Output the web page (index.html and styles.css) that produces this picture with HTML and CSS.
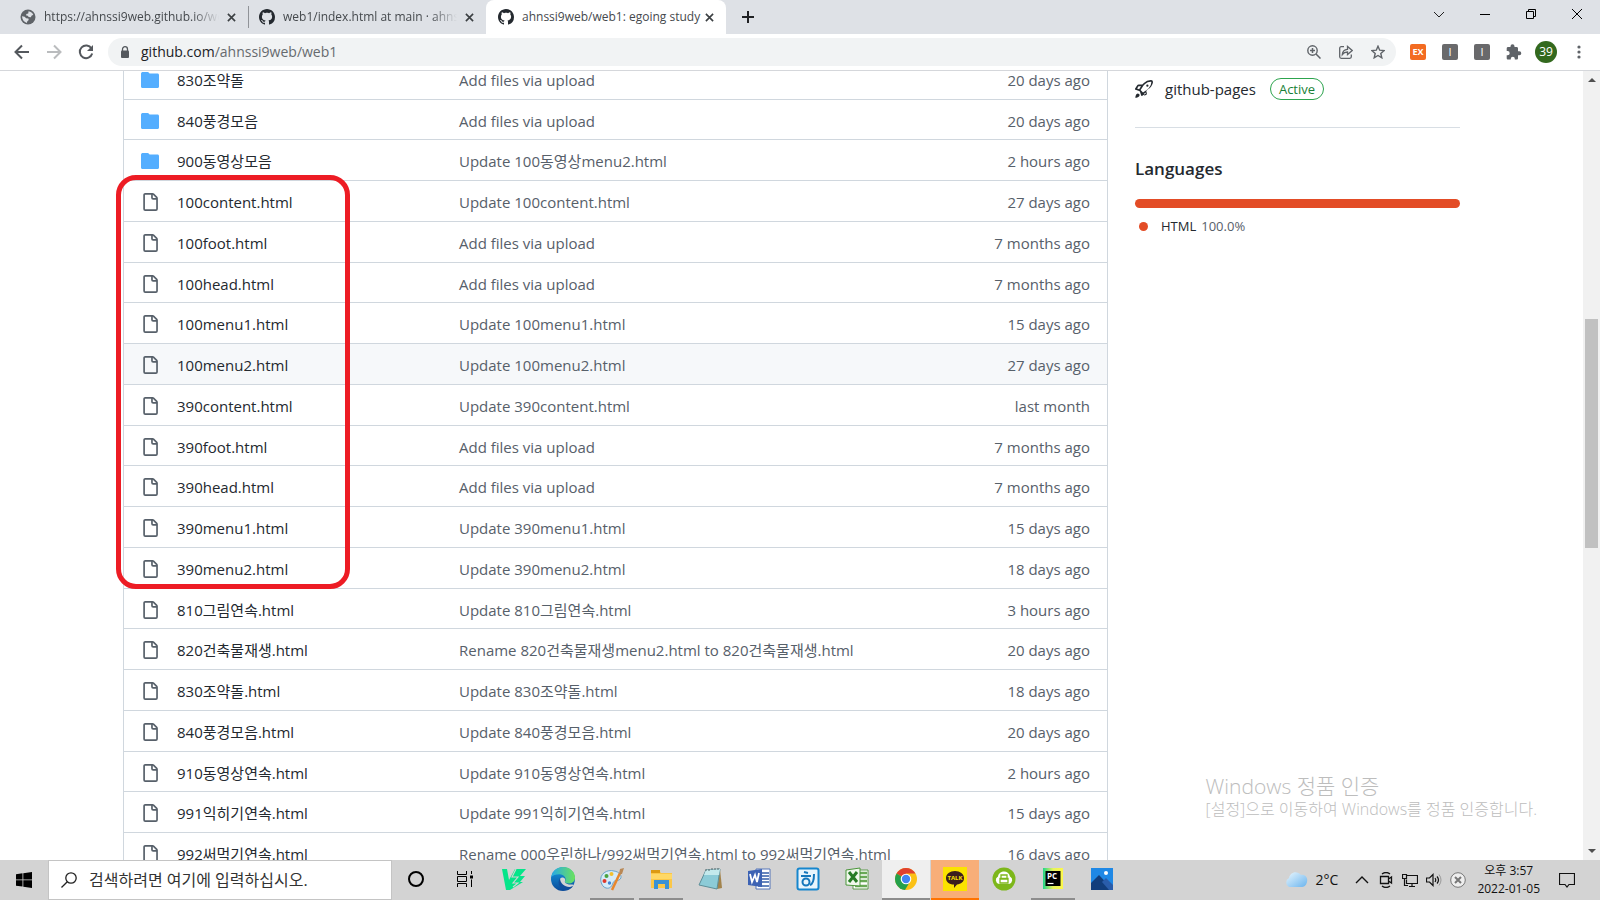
FILE: index.html
```html
<!DOCTYPE html>
<html lang="ko">
<head>
<meta charset="utf-8">
<title>ahnssi9web/web1: egoing study</title>
<link rel="stylesheet" href="styles.css">
</head>
<body>
<svg class="defs" aria-hidden="true">
  <symbol id="github" viewBox="0 0 16 16"><path fill="#24292f" d="M8 0C3.58 0 0 3.58 0 8c0 3.54 2.29 6.53 5.47 7.59.4.07.55-.17.55-.38 0-.19-.01-.82-.01-1.49-2.01.37-2.53-.49-2.69-.94-.09-.23-.48-.94-.82-1.13-.28-.15-.68-.52-.01-.53.63-.01 1.08.58 1.23.82.72 1.21 1.87.87 2.33.66.07-.52.28-.87.51-1.07-1.78-.2-3.64-.89-3.64-3.95 0-.87.31-1.59.82-2.15-.08-.2-.36-1.02.08-2.12 0 0 .67-.21 2.2.82.64-.18 1.32-.27 2-.27s1.36.09 2 .27c1.53-1.04 2.2-.82 2.2-.82.44 1.1.16 1.92.08 2.12.51.56.82 1.27.82 2.15 0 3.07-1.87 3.75-3.65 3.95.29.25.54.73.54 1.48 0 1.07-.01 1.93-.01 2.2 0 .21.15.46.55.38A8.01 8.01 0 0 0 16 8c0-4.42-3.58-8-8-8z"/></symbol>
  <symbol id="close" viewBox="0 0 10 10"><path d="M1 1l8 8M9 1L1 9" stroke="#3c4043" stroke-width="1.8" fill="none"/></symbol>
  <symbol id="folder" viewBox="0 0 18 18"><path fill="#54aeff" d="M2 1h4.500c.8 0 1.200.4 1.600 1l.5.500H16.500c.9 0 1.500.6 1.500 1.500V15.500c0 .9-.6 1.500-1.500 1.500H1.500C.6 17 0 16.400 0 15.500V2.700C0 1.700.8 1 2 1z"/></symbol>
  <symbol id="file" viewBox="0 0 16 16"><path fill="#57606a" fill-rule="evenodd" d="M3.75 1.5a.25.25 0 0 0-.25.25v12.5c0 .138.112.25.25.25h9.5a.25.25 0 0 0 .25-.25V6h-2.75A1.75 1.75 0 0 1 9 4.25V1.5H3.75zm6.75.062V4.25c0 .138.112.25.25.25h2.688a.252.252 0 0 0-.011-.013l-2.914-2.914a.272.272 0 0 0-.013-.011zM2 1.75C2 .784 2.784 0 3.75 0h6.586c.464 0 .909.184 1.237.513l2.914 2.914c.329.328.513.773.513 1.237v9.586A1.75 1.75 0 0 1 13.25 16h-9.5A1.75 1.75 0 0 1 2 14.25V1.75z"/></symbol>
</svg>

<header class="browser">
  <div class="tabs">
    <div class="tab tab-first">
      <svg class="i16" viewBox="0 0 16 16"><circle cx="8" cy="8" r="7.500" fill="#5f6368"/><path fill="#dee1e6" d="M8.500 2.200c2.500.2 4 1.700 4.800 3.600l-1.800.9-.6 1.600-2.200-.2-.9-1.300-1.600-.3.100-1.500 2-.6zM2 7.200l2.700.5 1.400 1.500 2.300.4.300 1.500-1.500 1.300-.3 1.500C4.200 13.200 2.200 10.800 2 7.200z"/></svg>
      <span class="tab-title fade">https://ahnssi9web.github.io/we</span>
      <button class="bare" aria-label="탭 닫기"><svg class="i9"><use href="#close"/></svg></button>
    </div>
    <div class="tab tab-second">
      <svg class="i16"><use href="#github"/></svg>
      <span class="tab-title fade">web1/index.html at main · ahns</span>
      <button class="bare" aria-label="탭 닫기"><svg class="i9"><use href="#close"/></svg></button>
    </div>
    <div class="tab tab-active">
      <svg class="i16"><use href="#github"/></svg>
      <span class="tab-title">ahnssi9web/web1: egoing study</span>
      <button class="bare" aria-label="탭 닫기"><svg class="i9"><use href="#close"/></svg></button>
    </div>
    <button class="bare new-tab" aria-label="새 탭"><svg class="i12" viewBox="0 0 12 12"><path d="M6 0v12M0 6h12" stroke="#202124" stroke-width="2"/></svg></button>
    <div class="window-buttons">
      <button class="bare" aria-label="탭 검색"><svg class="i12" viewBox="0 0 12 12"><path d="M1 4l5 5 5-5" stroke="#222" fill="none"/></svg></button>
      <button class="bare" aria-label="최소화"><svg class="i12" viewBox="0 0 12 12"><path d="M1 6.500h10" stroke="#000"/></svg></button>
      <button class="bare" aria-label="이전 크기로"><svg class="i12" viewBox="0 0 12 12"><path d="M1.500 3.500h7v7h-7zM3.500 3.500v-2h7v7h-2" stroke="#000" fill="none"/></svg></button>
      <button class="bare" aria-label="닫기"><svg class="i12" viewBox="0 0 12 12"><path d="M1 1l10 10M11 1L1 11" stroke="#000"/></svg></button>
    </div>
  </div>

  <div class="toolbar">
    <button class="bare" aria-label="뒤로"><svg class="i16" viewBox="0 0 16 16"><path d="M15 8H2M8 1.500L1.500 8 8 14.500" stroke="#54585d" stroke-width="2" fill="none"/></svg></button>
    <button class="bare" aria-label="앞으로"><svg class="i16" viewBox="0 0 16 16"><path d="M1 8h13M8 1.500L14.500 8 8 14.500" stroke="#babcbe" stroke-width="2" fill="none"/></svg></button>
    <button class="bare" aria-label="새로고침"><svg class="i16" viewBox="0 0 16 16"><path d="M13.500 4.500A6.300 6.300 0 1 0 14.200 9.500" stroke="#54585d" stroke-width="2" fill="none"/><path d="M15 1v6H9z" fill="#54585d"/></svg></button>
    <div class="address">
      <svg class="lock" viewBox="0 0 10 12"><path d="M2.500 5V3.200a2.500 2.500 0 0 1 5 0V5" stroke="#54585d" stroke-width="1.300" fill="none"/><rect x="1" y="4.500" width="8" height="7.500" rx="1" fill="#54585d"/></svg>
      <a class="url" href="#">github.com<span>/ahnssi9web/web1</span></a>
      <button class="bare" aria-label="확대"><svg class="i14" viewBox="0 0 14 14"><path d="M9 9l4.500 4.500M3 5.500h5M5.500 3v5" stroke="#5f6368" stroke-width="1.500"/><circle cx="5.500" cy="5.500" r="4.700" stroke="#5f6368" stroke-width="1.400" fill="none"/></svg></button>
      <button class="bare" aria-label="공유"><svg class="i14" viewBox="0 0 14 14"><path d="M5 1.700H2.200C1.300 1.700.7 2.300.7 3.200v8.600c0 .9.600 1.500 1.500 1.500h8.600c.9 0 1.500-.6 1.500-1.500V9.500M3.300 9.500C3.500 6 5.600 4.500 8.500 4.300V1.500l4.700 4-4.700 4V7C6.300 7 4.600 7.700 3.300 9.500z" stroke="#5f6368" stroke-width="1.300" fill="none"/></svg></button>
      <button class="bare" aria-label="북마크"><svg class="i14" viewBox="0 0 14 14"><path d="M7 1.200l1.700 4 4.400.4-3.300 2.900 1 4.300L7 10.500l-3.800 2.300 1-4.300L.9 5.600l4.400-.4z" stroke="#5f6368" stroke-width="1.400" fill="none"/></svg></button>
    </div>
    <button class="bare ext ext-orange" aria-label="확장 프로그램 EX">EX</button>
    <button class="bare ext" aria-label="확장 프로그램 1">I</button>
    <button class="bare ext" aria-label="확장 프로그램 2">I</button>
    <button class="bare" aria-label="확장 프로그램"><svg class="i16" viewBox="0 0 16 16"><path fill="#5f6368" d="M13.300 7.300H12V4.500c0-.8-.6-1.400-1.400-1.400H8.500V2.300a2 2 0 0 0-4 0v.8H2.100C1.300 3.100.7 3.700.7 4.500v2.600h.9a2.100 2.100 0 0 1 0 4.200H.7v2.900c0 .8.600 1.400 1.400 1.400h2.700v-.9a2 2 0 0 1 4 0v.9h1.800c.8 0 1.400-.6 1.400-1.400v-2.900h1.300a2 2 0 0 0 0-4z"/></svg></button>
    <button class="bare profile" aria-label="프로필">39</button>
    <button class="bare" aria-label="메뉴"><svg class="dots" viewBox="0 0 4 14"><g fill="#5f6368"><circle cx="2" cy="2" r="1.600"/><circle cx="2" cy="7" r="1.600"/><circle cx="2" cy="12" r="1.600"/></g></svg></button>
  </div>
</header>

<main class="viewport">
  <div class="page">
    <section class="files-box">
      <table class="files">
        <tbody id="rows"></tbody>
      </table>
      <div class="marker"></div>
    </section>
    <aside class="side">
      <div class="env">
        <svg class="rocket" viewBox="0 0 16 16"><path fill="#24292f" fill-rule="evenodd" d="M14.064 0a8.750 8.750 0 0 0-6.187 2.563l-.459.458c-.314.314-.616.641-.904.979H3.310a1.750 1.750 0 0 0-1.490.833L.11 7.607a.75.75 0 0 0 .418 1.110l3.102.954c.37.114.666.404.784.773l.008.012.978 3.100a.75.75 0 0 0 1.110.418l2.774-1.710A1.750 1.750 0 0 0 10.117 10.773V9.485c.338-.288.665-.590.979-.904l.458-.459A8.750 8.750 0 0 0 16 1.936V1.750A1.750 1.750 0 0 0 14.250 0zM10.500 10.625c-.088.060-.177.118-.266.175l-2.350 1.521.548 1.783 1.949-1.200a.25.25 0 0 0 .119-.213zM3.678 8.116L5.200 5.766c.058-.090.117-.178.176-.266H3.309a.25.25 0 0 0-.213.119l-1.200 1.950zM8.938 3.623A7.250 7.250 0 0 1 14.063 1.500h.187a.25.25 0 0 1 .250.250v.186a7.250 7.250 0 0 1-2.123 5.127l-.459.458a15.210 15.210 0 0 1-2.499 2.020l-2.317 1.500-2.143-2.143 1.500-2.317a15.250 15.250 0 0 1 2.020-2.500zM12 5a1 1 0 1 1-2 0 1 1 0 0 1 2 0zM3.560 14.560a1.500 1.500 0 0 0-2.122-2.121c-.734.733-1.047 2.332-1.150 3.003a.23.23 0 0 0 .265.265c.671-.103 2.273-.416 3.005-1.148z"/></svg>
        <a href="#">github-pages</a>
        <span class="badge">Active</span>
      </div>
      <h2>Languages</h2>
      <div class="bar"></div>
      <div class="lang"><i></i><b>HTML</b><span>100.0%</span></div>
    </aside>
  </div>
  <div class="scrollbar">
    <svg class="arrow" viewBox="0 0 8 4"><path d="M0 4l4-4 4 4z" fill="#505050"/></svg>
    <div class="thumb"></div>
    <svg class="arrow" viewBox="0 0 8 4"><path d="M0 0l4 4 4-4z" fill="#505050"/></svg>
  </div>
  <div class="watermark">
    <p class="wm-title">Windows 정품 인증</p>
    <p>[설정]으로 이동하여 Windows를 정품 인증합니다.</p>
  </div>
</main>

<footer class="taskbar">
  <button class="bare start" aria-label="시작"><svg class="i16" viewBox="0 0 16 16"><path d="M0 2.200l6.500-.9v6.200H0zM7.300 1.200L16 0v7.500H7.300zM0 8.300h6.500v6.300L0 13.700zM7.300 8.300H16V16l-8.700-1.200z"/></svg></button>
  <label class="search">
    <svg class="i16" viewBox="0 0 16 16"><circle cx="10" cy="6" r="5.200" stroke="#222" stroke-width="1.300" fill="none"/><path d="M6.300 9.700L.5 15.500" stroke="#222" stroke-width="1.300"/></svg>
    <input type="text" aria-label="검색" placeholder="검색하려면 여기에 입력하십시오.">
  </label>
  <nav class="apps">
    <button class="bare app" aria-label="Cortana"><svg class="i24" viewBox="0 0 24 24"><circle cx="12" cy="12" r="7" stroke="#000" stroke-width="2" fill="none"/></svg></button>
    <button class="bare app" aria-label="작업 보기"><svg class="i24" viewBox="0 0 24 24"><path d="M4.500 4v3.500h9V4M4.500 20v-3.500h9V20M4.500 9.500h9v5h-9zM18.500 4v3M18.500 12.500V20" stroke="#000" fill="none"/><path d="M17 8.500h3v3h-3z"/></svg></button>
    <button class="bare app" aria-label="V3"><svg class="i24" viewBox="0 0 24 24"><path fill="#05e58a" d="M0 2h5l2 11 6-11h11l-6 7h5l-5 6h3L8 23H4z"/><path d="M14 2l-4 8h6l-5 6h5l-5 4" stroke="#d4d4d4" stroke-width="1.100" fill="none"/></svg></button>
    <button class="bare app" aria-label="Edge"><svg class="i24" viewBox="0 0 24 24"><defs><linearGradient id="e1"><stop stop-color="#27a9e8"/><stop offset="1" stop-color="#6be35b"/></linearGradient><linearGradient id="e2" y2="1" x2="0"><stop stop-color="#159ce2"/><stop offset="1" stop-color="#0b4a99"/></linearGradient></defs><circle cx="12" cy="12" r="12" fill="url(#e2)"/><path fill="url(#e1)" d="M.3 10C1.500 3.500 6.500 0 12 0c7 0 12 5 12 10.500 0 4-3 6-6.500 6-3 0-4-1.200-3.500-2.200 2-3-1-7-5.500-7C4.500 7.300 1.500 8.500.3 10z"/><path d="M9 12c-2 5 3 10.500 12.500 7.500C24 16 19 19 14.800 16.300 13 15 14.500 14 14 12c-1-2-4-2-5 0z" fill="#d4d4d4"/><path d="M9 11c-4 6 1 12 7.500 12 3-.8 4.500-2.200 5.500-4C17 22 9 18 9 11z" fill="#124f9c"/></svg></button>
    <button class="bare app running" aria-label="그림판"><svg class="i24" viewBox="0 0 24 24"><path d="M1 15C-1 7 7 2 14 4c7 1 9 7 5 9-3 1-5 0-6 3s-3 6-7 5c-3-1-4-3-5-6z" fill="#d6ebf7" stroke="#6aa3c9"/><circle cx="4.500" cy="14" r="2" fill="#e0392b"/><circle cx="6.500" cy="9" r="2" fill="#4aa341"/><circle cx="11.500" cy="7" r="2" fill="#f3c02d"/><circle cx="9.500" cy="16" r="1.700" fill="#3d83d6"/><path d="M12 23L20 6" stroke="#e8862b" stroke-width="2.500"/><path d="M19 7l1-5 4-1-2 6z" fill="#b98855"/></svg></button>
    <button class="bare app running" aria-label="파일 탐색기"><svg class="i24" viewBox="0 0 24 24"><path d="M2 3h8l2 3h11v15H2z" fill="#fbc748"/><path d="M2 3h9v3H2z" fill="#dc9a13"/><path d="M2 7h21v5H2z" fill="#ffd866"/><path d="M5 22v-9h15v9h-4v-5H9v5z" fill="#3a92d6"/></svg></button>
    <button class="bare app" aria-label="메모장"><svg class="i24" viewBox="0 0 24 24"><path d="M22 2l2 19-5 1z" fill="#a2834c"/><path d="M8 3l14-1-3 20-18-4z" fill="#8ccbd7" stroke="#5c8e98"/><path d="M8 3l14-1-1 6L6 8z" fill="#c4e9ec"/><path d="M8 2v2M11 2v2M14 1v2M17 1v2M20 1v2" stroke="#53666a"/></svg></button>
    <button class="bare app" aria-label="Word"><svg class="i24" viewBox="0 0 24 24"><path d="M9 2h14v20H9z" fill="#fff" stroke="#5575b8"/><path d="M14 6h8M14 9h8M14 12h8M14 15h8M11 19h11" stroke="#355da8" stroke-width="1.500"/><path d="M1 4l14-2v18L1 18z" fill="#3c62b4"/><path d="M3 7l2 8 3-7 2 7 2-9" stroke="#fff" stroke-width="1.800" fill="none"/></svg></button>
    <button class="bare app" aria-label="한글"><svg class="i24" viewBox="0 0 24 24"><rect x="1.500" y="1.500" width="21" height="21" rx="2" fill="#e9f5fc" stroke="#1686cd" stroke-width="2"/><path d="M8 5l4 1M5 9h10M14 18c3-1 4-4 4-11" stroke="#1677bb" stroke-width="2" fill="none"/><circle cx="10" cy="15" r="3.500" stroke="#1677bb" stroke-width="2" fill="none"/></svg></button>
    <button class="bare app" aria-label="Excel"><svg class="i24" viewBox="0 0 24 24"><path d="M8 3h15v19H8z" fill="#fff" stroke="#5d9a4c"/><path d="M15 6h7M15 10h7M15 14h7M10 19h12" stroke="#69a956" stroke-width="2.500"/><path d="M1 3l14-2v18L1 18z" fill="#f0f8ec" stroke="#4b963b"/><path d="M4 5l8 10M12 5L4 15" stroke="#267b25" stroke-width="3"/></svg></button>
    <button class="bare app current" aria-label="Chrome"><svg class="i24" viewBox="0 0 24 24"><circle cx="12" cy="12" r="11" fill="#fbc116"/><path d="M12 12L2.500 6.500A11 11 0 0 1 21.500 6.500H12z" fill="#e0412f"/><path d="M12 12l-9.500-5.500A11 11 0 0 0 11 23l5-8.500z" fill="#24a04b"/><circle cx="12" cy="12" r="5.300" fill="#fff"/><circle cx="12" cy="12" r="4.200" fill="#4285f4"/></svg></button>
    <button class="bare app alert" aria-label="카카오톡"><svg class="i24" viewBox="0 0 24 24"><path d="M0 0h24v24H0z" fill="#fbe300"/><path d="M12 4c5 0 9 3 9 7s-3 6-7 6.500L11 21v-3.500c-5 0-8-2.500-8-6.500s4-7 9-7z" fill="#3b1e1e"/><text x="12" y="13" text-anchor="middle" class="talk">TALK</text></svg></button>
    <button class="bare app" aria-label="네트워크 프린터"><svg class="i24" viewBox="0 0 24 24"><circle cx="12" cy="12" r="11.500" fill="#7db71a"/><path d="M7 17a4 4 0 0 1-1-7.500c1-6 10.500-7 12 0A4 4 0 0 1 17 17z" fill="#fff"/><path d="M9 8h6v4H9zM8 11.500h8V16H8z" fill="#fff" stroke="#7db71a" stroke-width="1.300"/></svg></button>
    <button class="bare app running" aria-label="PyCharm"><svg class="i24" viewBox="0 0 24 24"><defs><linearGradient id="p1"><stop stop-color="#21d789"/><stop offset=".5" stop-color="#e7f35b"/><stop offset="1" stop-color="#fcf84a"/></linearGradient></defs><path d="M2 1h20v21H2z" fill="url(#p1)"/><path d="M4.500 4h15v15h-15z"/><text x="6" y="12" class="pc">PC</text><path d="M6.500 16.500h6" stroke="#fff" stroke-width="1.200"/></svg></button>
    <button class="bare app" aria-label="사진"><svg class="i24" viewBox="0 0 24 24"><path d="M1 1h22v22H1z" fill="#1f88e5"/><path d="M1 16l8-8 14 15H1z" fill="#123e7c"/><path d="M12 15l4-4 7 7v5H19z" fill="#2a5dab"/><circle cx="16" cy="6" r="2" fill="#fff"/></svg></button>
  </nav>
  <div class="tray">
    <svg class="i24" viewBox="0 0 24 24"><defs><linearGradient id="c1" y2="1"><stop stop-color="#eaf7fe"/><stop offset="1" stop-color="#6ab4ee"/></linearGradient></defs><path d="M5 19a5 5 0 0 1 0-9c1-6 8-8 12-3 5-1 7 4 6 7-1 4-3 5-6 5z" fill="url(#c1)"/></svg>
    <span class="temp">2°C</span>
    <svg class="i16" viewBox="0 0 16 16"><path d="M2 11l6-6 6 6" stroke="#111" stroke-width="1.400" fill="none"/></svg>
    <svg class="i16" viewBox="0 0 16 16"><path d="M2.500 4.500h8v7h-8zM10.500 7l3-2v6l-3-2M4 2q4-3 8 0M4 14q4 3 8 0" stroke="#111" stroke-width="1.300" fill="none"/></svg>
    <svg class="i16" viewBox="0 0 16 16"><path d="M5 3.500h10.500v8H4.500v-4M10 11.500V14M7 14.500h6M.5 2.500h4v4h-4zM2.500 6.500v7H6" stroke="#111" stroke-width="1.200" fill="none"/></svg>
    <svg class="i16" viewBox="0 0 16 16"><path d="M.5 6h3L7 2.500v11L3.500 10h-3zM9 6q1.500 2 0 4M11 4.500q3 3.500 0 7" stroke="#111" stroke-width="1.200" fill="none"/><path d="M13 2.500q4 5.500 0 11" stroke="#999" fill="none"/></svg>
    <svg class="i16" viewBox="0 0 16 16"><circle cx="8" cy="8" r="7.300" fill="#eee" stroke="#777"/><path d="M5 5l6 6M11 5l-6 6" stroke="#777" stroke-width="2"/></svg>
    <div class="clock"><span>오후 3:57</span><span>2022-01-05</span></div>
    <button class="bare" aria-label="알림"><svg class="i16" viewBox="0 0 16 16"><path d="M.5 1.500h15v11H10L8 15l-2-2.500H.5z" stroke="#111" stroke-width="1.200" fill="none"/></svg></button>
  </div>
</footer>
<script src="files.js"></script>
</body>
</html>
```

FILE: files.js
```js
const entries = [
  ["folder", "830조약돌", "Add files via upload", "20 days ago"],
  ["folder", "840풍경모음", "Add files via upload", "20 days ago"],
  ["folder", "900동영상모음", "Update 100동영상menu2.html", "2 hours ago"],
  ["file", "100content.html", "Update 100content.html", "27 days ago"],
  ["file", "100foot.html", "Add files via upload", "7 months ago"],
  ["file", "100head.html", "Add files via upload", "7 months ago"],
  ["file", "100menu1.html", "Update 100menu1.html", "15 days ago"],
  ["file", "100menu2.html", "Update 100menu2.html", "27 days ago"],
  ["file", "390content.html", "Update 390content.html", "last month"],
  ["file", "390foot.html", "Add files via upload", "7 months ago"],
  ["file", "390head.html", "Add files via upload", "7 months ago"],
  ["file", "390menu1.html", "Update 390menu1.html", "15 days ago"],
  ["file", "390menu2.html", "Update 390menu2.html", "18 days ago"],
  ["file", "810그림연속.html", "Update 810그림연속.html", "3 hours ago"],
  ["file", "820건축물재생.html", "Rename 820건축물재생menu2.html to 820건축물재생.html", "20 days ago"],
  ["file", "830조약돌.html", "Update 830조약돌.html", "18 days ago"],
  ["file", "840풍경모음.html", "Update 840풍경모음.html", "20 days ago"],
  ["file", "910동영상연속.html", "Update 910동영상연속.html", "2 hours ago"],
  ["file", "991익히기연속.html", "Update 991익히기연속.html", "15 days ago"],
  ["file", "992써먹기연속.html", "Rename 000우린하나/992써먹기연속.html to 992써먹기연속.html", "16 days ago"]
];

document.getElementById("rows").innerHTML = entries.map(([kind, name, message, age]) => `
  <tr${name === "100menu2.html" ? ' class="hovered"' : ""}>
    <td class="kind"><svg><use href="#${kind}"/></svg></td>
    <td class="name"><a href="#">${name}</a></td>
    <td class="message"><a href="#">${message}</a></td>
    <td class="age">${age}</td>
  </tr>`).join("");
```

FILE: styles.css
```css
* { box-sizing: border-box; }
body {
  margin: 0;
  height: 100vh;
  display: flex;
  flex-direction: column;
  overflow: hidden;
  background: #fff;
  color: #24292f;
  font: 15px/24px "Open Sans", "Noto Sans CJK KR", sans-serif;
}
a { color: inherit; text-decoration: none; }
p, h2 { margin: 0; }
svg { display: block; flex: none; }
.defs { position: absolute; width: 0; height: 0; }
.bare { display: flex; align-items: center; justify-content: center; padding: 0; border: 0; background: none; font: inherit; color: inherit; flex: none; }
.i9 { width: 9px; height: 9px; }
.i12 { width: 12px; height: 12px; }
.i14 { width: 14px; height: 14px; }
.i16 { width: 16px; height: 16px; }
.i24 { width: 24px; height: 24px; }

/* Tabs */
.browser { border-bottom: 1px solid #d5d7db; flex: none; }
.tabs { display: flex; height: 34px; background: #dee1e6; }
.tab { display: flex; align-items: center; gap: 8px; width: 240px; padding: 0 12px 0 20px; font-size: 12px; color: #45494d; }
.tab-first { width: 248px; }
.tab-second { width: 238px; padding-left: 10px; border-left: 1px solid #909398; border-image: linear-gradient(transparent 7px, #909398 7px 27px, transparent 27px) 1; }
.tab-active { padding-left: 12px; background: #fff; border-radius: 8px 8px 0 0; }
.tab-title { flex: 1; min-width: 0; white-space: nowrap; }
.fade { mask-image: linear-gradient(90deg, #000 85%, transparent); }
.new-tab { width: 44px; }
.window-buttons { display: flex; gap: 34px; margin-left: auto; padding: 0 17px 6px 0; }

/* Toolbar */
.toolbar { display: flex; align-items: center; gap: 16px; height: 36px; padding: 0 19px 0 14px; }
.address { flex: 1; display: flex; align-items: center; gap: 18px; height: 28px; padding: 0 11px 0 12px; margin: 0 -2px; border-radius: 14px; background: #f1f3f4; }
.lock { width: 10px; height: 12px; }
.url { flex: 1; margin-left: -7px; font-size: 14px; color: #202124; }
.url span { color: #666a6e; }
.ext { width: 16px; height: 16px; border-radius: 2px; background: #69696b; color: #fff; font-size: 11px; line-height: 16px; }
.ext-orange { background: #f36b21; font-size: 9px; font-weight: 700; }
.profile { width: 22px; height: 22px; margin: 0 4px 0 -3px; border-radius: 50%; background: #33691e; color: #fff; font-size: 12px; }
.dots { width: 4px; height: 14px; }

/* Page */
.viewport { position: relative; display: flex; flex: 1; min-height: 0; overflow: hidden; }
.page { flex: 1; display: flex; align-items: flex-start; gap: 27px; max-width: 1337px; margin: 0 auto; }
.files-box { position: relative; flex: 1; margin-top: -12px; border: 1px solid #d0d7de; border-width: 0 1px; }
.files { width: 100%; border-spacing: 0; table-layout: fixed; }
.files td { height: 41px; padding: 2px 0 0; border-bottom: 1px solid #d0d7de; white-space: nowrap; }
.files tr:nth-child(4n + 2) td { height: 40px; }
.files .kind { width: 53px; padding-left: 17px; }
.files .name { width: 282px; }
.files .message { color: #57606a; }
.files .age { width: 140px; padding-right: 17px; text-align: right; color: #57606a; }
.kind svg { width: 18px; height: 18px; }
.hovered td { background: #f6f8fa; }
.marker { position: absolute; left: -8px; top: 116px; width: 234px; height: 414px; border: 5px solid #ed1c24; border-radius: 20px; }

.side { width: 325px; flex: none; }
.env { display: flex; align-items: center; height: 57px; padding-bottom: 20px; border-bottom: 1px solid #d8dee4; }
.rocket { width: 18px; height: 18px; margin-right: 12px; }
.badge { margin-left: 14px; padding: 0 8px; border: 1px solid #2da44e; border-radius: 11px; color: #1a7f37; font-size: 13px; font-weight: 500; line-height: 20px; }
.side h2 { margin: 29px 0 18px; font-size: 17px; font-weight: 600; line-height: 24px; }
.bar { height: 9px; border-radius: 5px; background: #e34c26; }
.lang { display: flex; align-items: center; gap: 5px; margin-top: 6px; font-size: 13px; color: #57606a; }
.lang i { width: 9px; height: 9px; margin: 0 8px 0 4px; border-radius: 50%; background: #e34c26; }
.lang b { font-weight: 500; color: #24292f; }

.scrollbar { width: 17px; display: flex; flex-direction: column; align-items: center; padding: 7px 0; background: #f1f1f1; }
.arrow { width: 8px; height: 4px; }
.thumb { width: 13px; height: 229px; margin: 237px 0 auto; background: #c1c1c1; }
.watermark { position: absolute; right: 63px; bottom: 39px; color: #bdbdbd; font-size: 16px; font-weight: 300; }
.wm-title { font-size: 21px; line-height: 22px; }

/* Taskbar */
.taskbar { display: flex; align-items: center; height: 40px; flex: none; background: #d3d3d3; color: #111; }
.start { width: 48px; height: 40px; }
.search { display: flex; align-items: center; gap: 12px; width: 344px; height: 40px; padding: 0 12px; border: 1px solid #c4c4c4; background: #fff; }
.search input { flex: 1; min-width: 0; padding: 0; border: 0; outline: 0; background: none; font: inherit; font-size: 16px; }
.search input::placeholder { color: #333; }
.apps { display: flex; gap: 1px; }
.app { width: 48px; height: 40px; border-bottom: 2px solid transparent; }
.running { border-image: linear-gradient(90deg, transparent 4px, #8d8d8d 4px 44px, transparent 44px) 2; }
.current { background: #efefef; border-color: #8d8d8d; }
.alert { background: #f8ae78; border-color: #ff7300; }
.talk { font: 700 6px "Open Sans", sans-serif; fill: #fbe300; }
.pc { font: 700 8px "Open Sans", sans-serif; fill: #fff; }
.tray { display: flex; align-items: center; gap: 8px; margin-left: auto; padding-right: 25px; }
.temp { margin-right: 8px; font-size: 14px; }
.clock { display: flex; flex-direction: column; align-items: center; margin: 0 11px 0 3px; font-size: 12px; line-height: 18px; }
```
